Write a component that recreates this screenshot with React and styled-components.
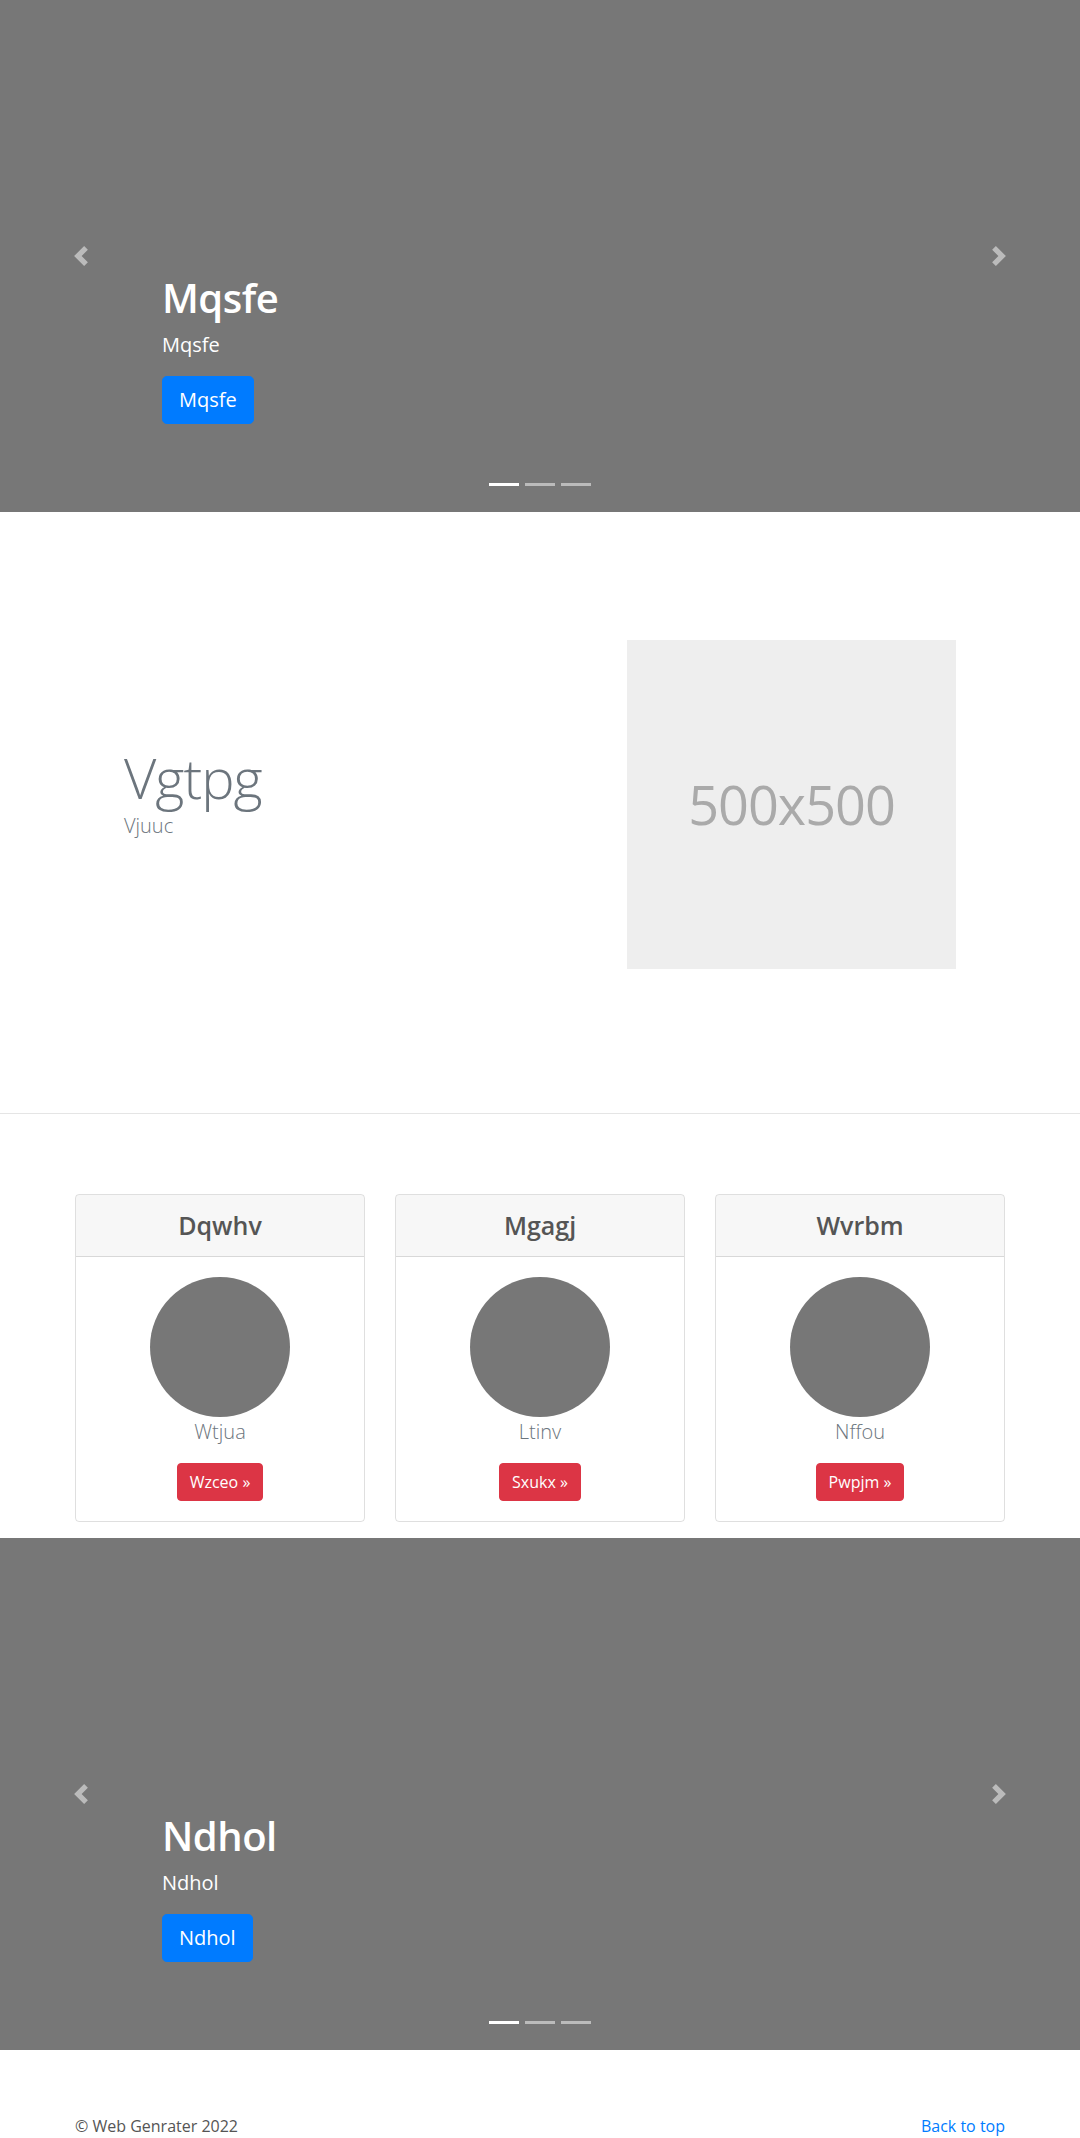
import React from "react";
import styled, { createGlobalStyle } from "styled-components";

const GlobalStyle = createGlobalStyle`
  * { box-sizing: border-box; }
  body {
    margin: 0;
    font-family: "Segoe UI", "Open Sans", "Noto Sans", sans-serif;
    font-size: 16px;
    line-height: 1.5;
    color: #212529;
    background: #fff;
  }
`;

/* ---------- carousel ---------- */

const Slide = styled.div`
  position: relative;
  height: 512px;
  background-color: #777;
  overflow: hidden;
`;

const Control = styled.a`
  position: absolute;
  top: 0;
  bottom: 0;
  ${(p) => (p.side === "left" ? "left: 0;" : "right: 0;")}
  width: 15%;
  display: flex;
  align-items: center;
  justify-content: center;
  opacity: 0.5;
  cursor: pointer;
  svg {
    width: 20px;
    height: 20px;
    display: block;
  }
`;

const Indicators = styled.ol`
  position: absolute;
  left: 0;
  right: 0;
  bottom: 0;
  display: flex;
  justify-content: center;
  list-style: none;
  padding: 0;
  margin: 0 0 16px;
  li {
    width: 30px;
    height: 3px;
    margin: 10px 3px;
    background-color: #fff;
    opacity: 0.5;
  }
  li.active {
    opacity: 1;
  }
`;

const Caption = styled.div`
  position: absolute;
  left: 15%;
  right: 15%;
  bottom: 48px;
  padding: 20px 0;
  color: #fff;
  text-align: left;
  z-index: 10;
`;

const CaptionTitle = styled.h1`
  margin: 0 0 8px;
  font-size: 40px;
  font-weight: 600;
  line-height: 1.2;
  letter-spacing: -0.5px;
`;

const CaptionText = styled.p`
  margin: 0 0 16px;
  font-size: 20px;
  line-height: 30px;
`;

const CaptionActions = styled.p`
  margin: 0 0 20px;
`;

const PrimaryButton = styled.a`
  display: inline-block;
  padding: 8px 16px;
  font-size: 20px;
  line-height: 30px;
  color: #fff;
  background-color: #007bff;
  border: 1px solid #007bff;
  border-radius: 4.8px;
  text-decoration: none;
`;

const Carousel = ({ title }) => (
  <Slide>
    <Indicators>
      <li className="active" />
      <li />
      <li />
    </Indicators>
    <Caption>
      <CaptionTitle>{title}</CaptionTitle>
      <CaptionText>{title}</CaptionText>
      <CaptionActions>
        <PrimaryButton href="#">{title}</PrimaryButton>
      </CaptionActions>
    </Caption>
    <Control side="left">
      <svg viewBox="0 0 8 8" fill="#fff">
        <path d="M5.25 0l-4 4 4 4 1.5-1.5L4.25 4l2.5-2.5L5.25 0z" />
      </svg>
    </Control>
    <Control side="right">
      <svg viewBox="0 0 8 8" fill="#fff">
        <path d="M2.75 0l-1.5 1.5L3.75 4l-2.5 2.5L2.75 8l4-4-4-4z" />
      </svg>
    </Control>
  </Slide>
);

/* ---------- featurette ---------- */

const Featurette = styled.section`
  padding: 128px 0 144px;
`;

const FeatureRow = styled.div`
  width: 832px;
  margin: 0 auto;
  display: flex;
  align-items: center;
  justify-content: space-between;
`;

const FeatureHeading = styled.h1`
  margin: 0;
  font-size: 56px;
  font-weight: 300;
  line-height: 1.2;
  letter-spacing: -1px;
  color: #6c757d;
`;

const FeatureLead = styled.p`
  margin: 0 0 24px;
  font-size: 20px;
  font-weight: 300;
  line-height: 30px;
  color: #6c757d;
`;

const Placeholder = styled.div`
  width: 329px;
  height: 329px;
  background-color: #eee;
  color: #aaa;
  font-size: 54px;
  letter-spacing: -1px;
  display: flex;
  align-items: center;
  justify-content: center;
`;

const Divider = styled.hr`
  margin: 0;
  border: 0;
  border-top: 1px solid rgba(0, 0, 0, 0.1);
`;

/* ---------- cards ---------- */

const CardSection = styled.section`
  width: 960px;
  margin: 0 auto;
  padding: 80px 15px 0;
`;

const CardGrid = styled.div`
  display: grid;
  grid-template-columns: repeat(3, 1fr);
  column-gap: 30px;
`;

const Card = styled.div`
  margin-bottom: 16px;
  border: 1px solid rgba(0, 0, 0, 0.125);
  border-radius: 4px;
  text-align: center;
  overflow: hidden;
`;

const CardHeader = styled.div`
  padding: 12px 20px;
  background-color: rgba(0, 0, 0, 0.03);
  border-bottom: 1px solid rgba(0, 0, 0, 0.125);
  h4 {
    margin: 0;
    font-size: 25px;
    font-weight: 600;
    line-height: 37px;
    color: #555;
  }
`;

const CardBody = styled.div`
  padding: 20px;
`;

const Avatar = styled.div`
  width: 140px;
  height: 140px;
  margin: 0 auto;
  border-radius: 50%;
  background-color: #777;
`;

const CardText = styled.p`
  margin: 0 0 16px;
  font-size: 20px;
  font-weight: 300;
  line-height: 30px;
  color: #6c757d;
`;

const DangerButton = styled.a`
  display: inline-block;
  padding: 6px 12px;
  font-size: 16px;
  line-height: 24px;
  color: #fff;
  background-color: #dc3545;
  border: 1px solid #dc3545;
  border-radius: 4px;
  text-decoration: none;
`;

/* ---------- footer ---------- */

const Footer = styled.footer`
  width: 960px;
  margin: 0 auto;
  padding: 64px 15px 0;
  display: flex;
  justify-content: space-between;
  p {
    margin: 0 0 16px;
    color: #555;
  }
  a {
    color: #007bff;
    text-decoration: none;
  }
`;

const cards = [
  { title: "Dqwhv", text: "Wtjua", action: "Wzceo" },
  { title: "Mgagj", text: "Ltinv", action: "Sxukx" },
  { title: "Wvrbm", text: "Nffou", action: "Pwpjm" },
];

export default function App() {
  return (
    <>
      <GlobalStyle />
      <Carousel title="Mqsfe" />

      <Featurette>
        <FeatureRow>
          <div>
            <FeatureHeading>Vgtpg</FeatureHeading>
            <FeatureLead>Vjuuc</FeatureLead>
          </div>
          <Placeholder>500x500</Placeholder>
        </FeatureRow>
      </Featurette>
      <Divider />

      <CardSection>
        <CardGrid>
          {cards.map((c) => (
            <Card key={c.title}>
              <CardHeader>
                <h4>{c.title}</h4>
              </CardHeader>
              <CardBody>
                <Avatar />
                <CardText>{c.text}</CardText>
                <DangerButton href="#">{c.action} &raquo;</DangerButton>
              </CardBody>
            </Card>
          ))}
        </CardGrid>
      </CardSection>

      <Carousel title="Ndhol" />

      <Footer>
        <p>&copy; Web Genrater 2022</p>
        <p>
          <a href="#">Back to top</a>
        </p>
      </Footer>
    </>
  );
}
